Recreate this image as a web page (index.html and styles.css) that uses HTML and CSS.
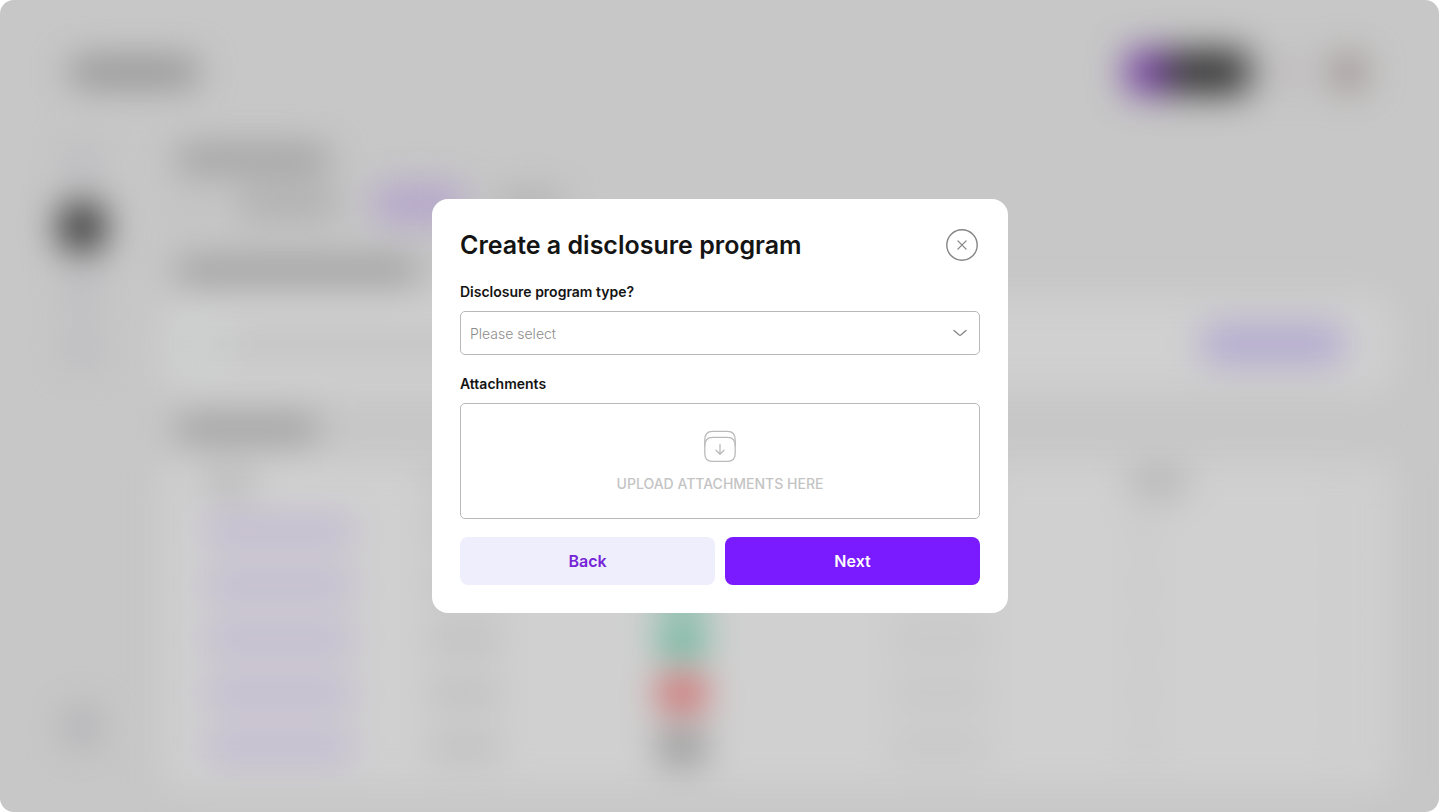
FILE: index.html
```html
<!DOCTYPE html>
<html lang="en">
<head>
    <meta charset="UTF-8">
    <meta name="viewport" content="width=device-width, initial-scale=1">
    <title>Create a disclosure program</title>
    <link rel="stylesheet" href="styles.css">
</head>
<body>

<div class="screen">
    <!-- Blurred page behind the dialog -->
    <div class="frame" aria-hidden="true">
        <div class="backdrop">
            <div class="topbar">
                <div class="bar logo"></div>
                <div class="switch"></div>
                <div class="bar bell"></div>
                <div class="avatar"></div>
            </div>
            <div class="columns">
                <div class="sidebar">
                    <div class="nav-item"></div>
                    <div class="nav-item active"></div>
                    <div class="nav-item"></div>
                    <div class="nav-item"></div>
                    <div class="nav-item last"></div>
                </div>
                <div class="content">
                    <div class="bar page-title"></div>
                    <div class="tabs">
                        <div class="bar tab-small"></div>
                        <div class="bar tab"></div>
                        <div class="bar tab-active"></div>
                        <div class="bar tab-last"></div>
                    </div>
                    <div class="bar heading"></div>
                    <div class="card notice">
                        <div class="dot"></div>
                        <div class="bar message"></div>
                        <div class="action"></div>
                    </div>
                    <div class="bar heading short"></div>
                    <div class="card list">
                        <div class="row head"><i></i><i></i><i></i><i></i><i></i><i></i></div>
                        <div class="row"><i></i><i></i><i class="green"></i><i></i><i></i><i></i></div>
                        <div class="row"><i></i><i></i><i class="green"></i><i></i><i></i><i></i></div>
                        <div class="row"><i></i><i></i><i class="green"></i><i></i><i></i><i></i></div>
                        <div class="row"><i></i><i></i><i class="red"></i><i></i><i></i><i></i></div>
                        <div class="row"><i></i><i></i><i class="gray"></i><i></i><i></i><i></i></div>
                    </div>
                </div>
            </div>
        </div>
    </div>

    <form class="dialog" role="dialog" aria-labelledby="dialog-title">
        <div class="dialog-header">
            <h1 id="dialog-title">Create a disclosure program</h1>
            <button type="button" class="close" aria-label="Close">
                <svg width="36" height="36" viewBox="0 0 36 36" fill="none" stroke="#858585">
                    <circle cx="18" cy="18" r="15.2" stroke-width="1.4"/>
                    <path d="M13.9 13.9l8.2 8.2M22.1 13.9l-8.2 8.2" stroke-width="1.3" stroke-linecap="round"/>
                </svg>
            </button>
        </div>

        <label class="field-label" for="program-type">Disclosure program type?</label>
        <div class="select-box">
            <select id="program-type">
                <option value="">Please select</option>
            </select>
            <svg class="chevron" width="14" height="8" viewBox="0 0 14 8" fill="none" stroke="#858585" stroke-width="1.3" stroke-linecap="round" stroke-linejoin="round">
                <path d="M1 1.4L6.2 6Q7 6.6 7.8 6L13 1.4"/>
            </svg>
        </div>

        <label class="field-label" for="attachments">Attachments</label>
        <label class="dropzone">
            <svg width="34" height="34" viewBox="0 0 34 34" fill="none" stroke="#bababa" stroke-width="1.3" stroke-linecap="round" stroke-linejoin="round">
                <path d="M1.8 16V10Q1.8 1.3 9.5 1.3H24.5Q32.2 1.3 32.2 10V16"/>
                <path d="M1.8 16Q1.8 7.3 9.5 7.3H24.5Q32.2 7.3 32.2 16V23.5Q32.2 31.3 24.5 31.3H9.5Q1.8 31.3 1.8 23.5Z"/>
                <path d="M17 14.5V24M13 20.2L17 24.2L21 20.2"/>
            </svg>
            <span>UPLOAD ATTACHMENTS HERE</span>
            <input type="file" id="attachments" multiple>
        </label>

        <div class="actions">
            <button type="button" class="btn btn-light">Back</button>
            <button type="submit" class="btn btn-primary">Next</button>
        </div>
    </form>
</div>

</body>
</html>
```
FILE: styles.css
```css
* { box-sizing: border-box; }
body { margin: 0; background: #fff; font-family: Inter, "Liberation Sans", sans-serif; color: #141414; }
button, select { font-family: inherit; }

.screen { display: grid; min-height: 100vh; }
.frame, .dialog { grid-area: 1 / 1; }

/* blurred page */
.frame { display: grid; margin-right: 1px; border-radius: 14px; overflow: hidden; background: #c7c7c7; }
.backdrop { display: flex; flex-direction: column; padding: 50px 47px 22px 60px; filter: blur(18px); }
.bar { height: 22px; border-radius: 8px; background: #959595; }
.topbar { display: flex; align-items: center; gap: 24px; height: 44px; padding-right: 26px; }
.logo { width: 128px; height: 26px; margin-left: 10px; margin-right: auto; background: #8c8c8c; }
.switch { width: 124px; height: 44px; border-radius: 10px; background: linear-gradient(to right, #6f3a9c 38px, #333 44px); }
.bell { width: 32px; background: #bbb4b7; }
.avatar { width: 36px; height: 36px; border-radius: 50%; background: #978b87; }

.columns { display: flex; flex: 1; gap: 60px; padding-top: 50px; }
.sidebar { display: flex; flex-direction: column; gap: 20px; width: 44px; padding-top: 2px; }
.nav-item { width: 32px; height: 38px; margin: 0 auto; border-radius: 10px; background: #bababf; }
.nav-item.active { width: 44px; height: 46px; background: #303030; }
.nav-item.last { margin-top: auto; margin-bottom: 44px; background: #aeaeb2; }

.content { flex: 1; }
.page-title { width: 154px; margin-left: 12px; margin-top: 4px; }
.tabs { display: flex; align-items: center; gap: 34px; height: 36px; margin: 16px 0 0 12px; }
.tab-small { width: 26px; background: #bcbcbc; }
.tab { width: 104px; background: #a5a5a5; }
.tab-active { width: 90px; height: 36px; background: #b3a2cb; }
.tab-last { width: 64px; background: #acacac; }
.heading { width: 242px; margin: 38px 0 0 12px; }
.heading.short { width: 142px; margin-top: 26px; }
.card { border-radius: 12px; background: #d0d0d0; }
.notice { display: flex; align-items: center; gap: 12px; height: 96px; margin-top: 14px; padding: 0 48px 0 28px; }
.dot { width: 20px; height: 20px; border-radius: 50%; background: #b5ccc4; }
.message { width: 360px; height: 16px; background: #b9b9b9; }
.action { width: 142px; height: 38px; margin-left: auto; border-radius: 10px; background: #b3a8d0; }

.list { height: 330px; margin-top: 20px; padding: 2px 40px 0; }
.row { display: grid; grid-template-columns: 226fr 234fr 232fr 244fr 206fr 18fr; align-items: center; height: 54px; }
.row i { width: 76px; height: 20px; border-radius: 6px; background: #b9b9b9; }
.row i:nth-child(1) { width: 150px; height: 26px; background: #c1b7d2; }
.row i:nth-child(3) { width: 48px; height: 34px; border-radius: 8px; }
.row i:nth-child(4) { width: 104px; background: #c3c3c3; }
.row i:nth-child(5) { width: 30px; background: #c6c6c6; }
.row i:nth-child(6) { width: 20px; background: #c8c8c8; }
.row .green { background: #62b398; }
.row .red { background: #cd6464; }
.row .gray { height: 30px; background: #949494; }
.row.head { height: 42px; }
.row.head i:nth-child(1) { width: 50px; height: 20px; background: #b0b0b0; }
.row.head i:nth-child(5) { width: 58px; background: #aaa; }

/* dialog */
.dialog { z-index: 1; place-self: center; display: flex; flex-direction: column; width: 100%; max-width: 576px; padding: 28px; border-radius: 16px; background: #fff; }
.dialog-header { display: flex; align-items: center; justify-content: space-between; margin-bottom: 20px; }
h1 { margin: 0; font-size: 25px; line-height: 36px; font-weight: 600; }
.close { width: 36px; height: 36px; padding: 0; border: none; background: none; cursor: pointer; }
.close svg { display: block; }

.field-label { margin-bottom: 10px; font-size: 14px; line-height: 18px; font-weight: 600; }
.select-box { display: grid; align-items: center; margin-bottom: 20px; }
.select-box select { grid-area: 1 / 1; width: 100%; height: 44px; padding: 0 40px 0 9px; border: 1px solid #b8b8b8; border-radius: 5px; background: #fff; color: #8c8c8c; font-size: 14px; font-weight: 300; appearance: none; }
.chevron { grid-area: 1 / 1; justify-self: end; margin-right: 13px; pointer-events: none; }

.dropzone { display: flex; flex-direction: column; align-items: center; justify-content: center; gap: 10px; height: 116px; margin-bottom: 18px; padding-top: 2px; border: 1px solid #b8b8b8; border-radius: 5px; color: #c4c4c4; font-size: 14px; line-height: 20px; font-weight: 500; cursor: pointer; }
.dropzone input { position: absolute; width: 1px; height: 1px; opacity: 0; }

.actions { display: grid; grid-template-columns: 1fr 1fr; gap: 10px; }
.btn { height: 48px; border: none; border-radius: 8px; font-size: 16px; font-weight: 600; cursor: pointer; }
.btn-light { background: #efeefd; color: #7524d6; }
.btn-primary { background: #7a1aff; color: #fff; }
```
